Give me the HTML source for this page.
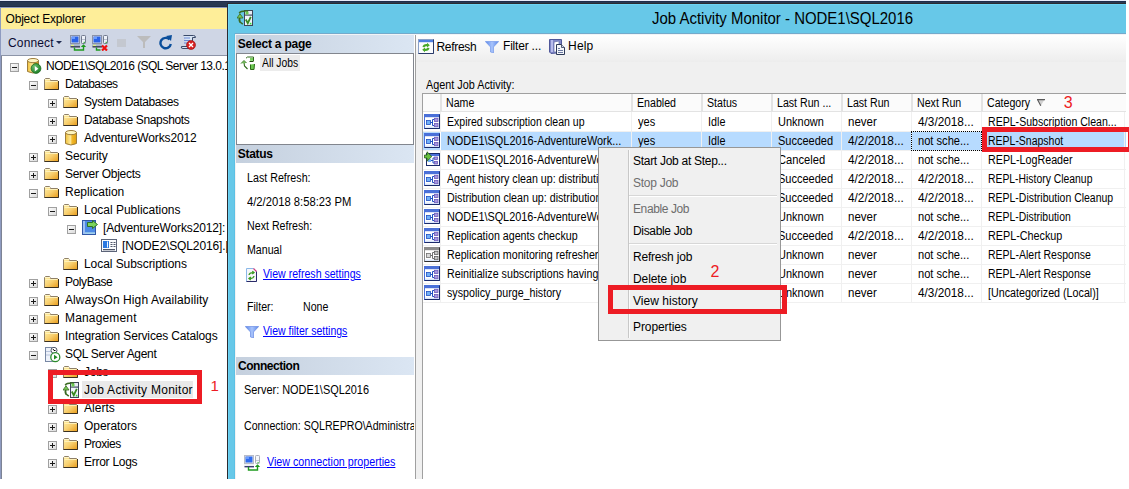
<!DOCTYPE html><html><head><meta charset="utf-8"><style>
html,body{margin:0;padding:0;} body{width:1129px;height:489px;position:relative;overflow:hidden;background:#fff;font-family:"Liberation Sans", sans-serif;} div{box-sizing:border-box;}
a{color:#0000ff}
</style></head><body>
<svg width="0" height="0" style="position:absolute"><defs><linearGradient id="gexp" x1="0" y1="0" x2="1" y2="1"><stop offset="0" stop-color="#fff"/><stop offset="1" stop-color="#d8d8d8"/></linearGradient><linearGradient id="gfold" x1="0" y1="0" x2="1" y2="1"><stop offset="0" stop-color="#fff0a8"/><stop offset="0.5" stop-color="#f8d070"/><stop offset="1" stop-color="#e89a18"/></linearGradient><linearGradient id="gcyl" x1="0" y1="0" x2="1" y2="0"><stop offset="0" stop-color="#f2c23a"/><stop offset="0.45" stop-color="#fbe79a"/><stop offset="0.6" stop-color="#f2b82a"/><stop offset="1" stop-color="#e0a010"/></linearGradient><radialGradient id="ggreen" cx="0.35" cy="0.3" r="0.8"><stop offset="0" stop-color="#6cc070"/><stop offset="1" stop-color="#167a20"/></radialGradient><linearGradient id="gdoc" x1="0" y1="0" x2="1" y2="0"><stop offset="0" stop-color="#f4f6fa"/><stop offset="1" stop-color="#b8c0d0"/></linearGradient></defs></svg>
<div style="position:absolute;left:0px;top:0px;width:1126px;height:1px;background:#e6eaf8"></div>
<div style="position:absolute;left:0px;top:1px;width:1126px;height:1px;background:#1e2c4a"></div>
<div style="position:absolute;left:0px;top:2px;width:1126px;height:4px;background:#283852"></div>
<div style="position:absolute;left:0px;top:6px;width:227px;height:1px;background:#1e2c4a"></div>
<div style="position:absolute;left:0px;top:7px;width:227px;height:472px;background:#fff"></div>
<div style="position:absolute;left:0px;top:7px;width:227px;height:1px;background:#8e9bc0"></div>
<div style="position:absolute;left:0px;top:8px;width:227px;height:21px;background:#feee99"></div>
<div style="position:absolute;left:0px;top:29px;width:227px;height:26px;background:#cfd6e5"></div>
<div style="position:absolute;left:0px;top:55px;width:227px;height:1px;background:#8d95a8"></div>
<div style="position:absolute;left:0px;top:7px;width:1px;height:472px;background:#8e9bc0"></div>
<div style="position:absolute;left:1px;top:56px;width:1px;height:423px;background:#7d8394"></div>
<div style="position:absolute;left:5.50px;top:9.63px;height:18px;line-height:18px;font-size:12px;color:#000;font-weight:400;white-space:pre;letter-spacing:-0.185px;">Object Explorer</div>
<div style="position:absolute;left:8.00px;top:33.93px;height:18px;line-height:18px;font-size:12px;color:#0a0a30;font-weight:400;white-space:pre;letter-spacing:0.152px;">Connect</div>
<svg style="position:absolute;left:56px;top:41px" width="6" height="3" viewBox="0 0 6 3"><path d="M0,0 L6,0 L3,3 Z" fill="#1e2a50"/></svg>
<svg style="position:absolute;left:70px;top:35px" width="17" height="16" viewBox="0 0 17 16"><rect x="0.5" y="0.5" width="9" height="8" fill="#d8dce8" stroke="#8a92a8"/><rect x="1.5" y="1.5" width="7" height="6" fill="#2a62e8"/><rect x="2" y="2" width="3" height="2" fill="#6a9cff"/><rect x="0" y="9" width="10" height="3" rx="1" fill="#a8b4cc"/><rect x="1" y="9.8" width="3" height="1.2" fill="#e0f080"/><rect x="0.5" y="11.2" width="9.5" height="1.3" fill="#30344a"/><rect x="11.5" y="0.5" width="4" height="8" rx="0.8" fill="#eef2fa" stroke="#70788c"/><rect x="12" y="4" width="3" height="1" fill="#b8c0d0"/><rect x="13.6" y="6.8" width="1.3" height="1.3" fill="#30b030"/><path d="M4.5,12.5 L4.5,15 L13.5,15 L13.5,10.5" fill="none" stroke="#1e9a1e" stroke-width="1.4"/><path d="M10.8,12 L13.5,9.2 L16.2,12 Z" fill="#1e9a1e"/></svg>
<svg style="position:absolute;left:92px;top:35px" width="17" height="16" viewBox="0 0 17 16"><rect x="0.5" y="0.5" width="9" height="8" fill="#d8dce8" stroke="#8a92a8"/><rect x="1.5" y="1.5" width="7" height="6" fill="#2a62e8"/><rect x="2" y="2" width="3" height="2" fill="#6a9cff"/><rect x="0" y="9" width="10" height="3" rx="1" fill="#a8b4cc"/><rect x="1" y="9.8" width="3" height="1.2" fill="#e0f080"/><rect x="0.5" y="11.2" width="9.5" height="1.3" fill="#30344a"/><rect x="11.5" y="0.5" width="4" height="8" rx="0.8" fill="#eef2fa" stroke="#70788c"/><rect x="12" y="4" width="3" height="1" fill="#b8c0d0"/><rect x="13.6" y="6.8" width="1.3" height="1.3" fill="#30b030"/><path d="M4.5,12.5 L4.5,15 L8.5,15" fill="none" stroke="#1e9a1e" stroke-width="1.4"/><path d="M10,10.5 L15,15.5 M15,10.5 L10,15.5" stroke="#f01010" stroke-width="2.2"/></svg>
<div style="position:absolute;left:117px;top:39px;width:9px;height:8px;background:#c4c8d0"></div>
<svg style="position:absolute;left:137px;top:36px" width="14" height="12" viewBox="0 0 14 12"><path d="M0,0 L14,0 L8,6 L8,12 L6,12 L6,6 Z" fill="#bcbcbc"/></svg>
<svg style="position:absolute;left:159px;top:35px" width="14" height="15" viewBox="0 0 14 15"><path d="M10.5,4.5 A5.2,5.2 0 1 0 11.8,9" fill="none" stroke="#0b4f9c" stroke-width="2.4"/><path d="M7,1 L13,0 L12,6 Z" fill="#0b4f9c"/></svg>
<svg style="position:absolute;left:180px;top:34px" width="16" height="16" viewBox="0 0 16 16"><path d="M3.5,1.5 L13.5,1.5 Q15.5,1.5 15.5,3.5 L12.5,3.5 L12.5,12.5 L1.5,12.5 Q0.5,14.5 3,14.5 L10,14.5" fill="#d8e4f4" stroke="#3a4a6a"/><path d="M4,4 L10,4 M4,6.5 L10,6.5 M4,9 L9,9" stroke="#6a8ad8"/><circle cx="11" cy="11" r="4.5" fill="#d82020" stroke="#901010" stroke-width="0.6"/><path d="M9,9 L13,13 M13,9 L9,13" stroke="#fff" stroke-width="1.4"/></svg>
<svg style="position:absolute;left:10px;top:63px" width="9" height="9" viewBox="0 0 9 9"><rect x="0.5" y="0.5" width="8" height="8" fill="url(#gexp)" stroke="#a0a0a0"/><rect x="2" y="4" width="5" height="1" fill="#1a1a1a"/></svg>
<svg style="position:absolute;left:27px;top:58px" width="15" height="16" viewBox="0 0 15 16"><path d="M0.5,2.5 L0.5,13.5 Q6,16.5 11.5,13.5 L11.5,2.5 Z" fill="url(#gcyl)" stroke="#9d7d3d"/><ellipse cx="6" cy="2.6" rx="5.5" ry="2.1" fill="#fff6c0" stroke="#9d7d3d"/><circle cx="9" cy="10.5" r="4.9" fill="url(#ggreen)" stroke="#1d6a1d" stroke-width="0.8"/><path d="M7.8,8 L11.4,10.7 L7.8,13.4 Z" fill="#fff"/></svg>
<div style="position:absolute;left:46.00px;top:56.73px;height:18px;line-height:18px;font-size:12px;color:#000;font-weight:400;white-space:pre;letter-spacing:-0.541px;width:180.50px;overflow:hidden;">NODE1\SQL2016 (SQL Server 13.0.1601.5 - SQLREPRO\Administrator)</div>
<svg style="position:absolute;left:29px;top:81px" width="9" height="9" viewBox="0 0 9 9"><rect x="0.5" y="0.5" width="8" height="8" fill="url(#gexp)" stroke="#a0a0a0"/><rect x="2" y="4" width="5" height="1" fill="#1a1a1a"/></svg>
<svg style="position:absolute;left:44px;top:78px" width="15" height="12" viewBox="0 0 15 12"><path d="M0.5,11.5 L0.5,1.5 L1.5,0.5 L5.5,0.5 L6.5,2.5 L13.5,2.5 L14.5,3.5 L14.5,11.5 Z" fill="url(#gfold)" stroke="#8f8068"/><path d="M1,1.5 L6,1.5" stroke="#fff6c8"/><path d="M1.5,3.5 L13.5,3.5" stroke="#fff1b8"/><path d="M0.5,11.5 L14.5,11.5 L14.5,3" fill="none" stroke="#3a3020"/></svg>
<div style="position:absolute;left:65.00px;top:74.73px;height:18px;line-height:18px;font-size:12px;color:#000;font-weight:400;white-space:pre;letter-spacing:-0.532px;width:161.50px;overflow:hidden;">Databases</div>
<svg style="position:absolute;left:48px;top:99px" width="9" height="9" viewBox="0 0 9 9"><rect x="0.5" y="0.5" width="8" height="8" fill="url(#gexp)" stroke="#a0a0a0"/><rect x="2" y="4" width="5" height="1" fill="#1a1a1a"/><rect x="4" y="2" width="1" height="5" fill="#1a1a1a"/></svg>
<svg style="position:absolute;left:63px;top:96px" width="15" height="12" viewBox="0 0 15 12"><path d="M0.5,11.5 L0.5,1.5 L1.5,0.5 L5.5,0.5 L6.5,2.5 L13.5,2.5 L14.5,3.5 L14.5,11.5 Z" fill="url(#gfold)" stroke="#8f8068"/><path d="M1,1.5 L6,1.5" stroke="#fff6c8"/><path d="M1.5,3.5 L13.5,3.5" stroke="#fff1b8"/><path d="M0.5,11.5 L14.5,11.5 L14.5,3" fill="none" stroke="#3a3020"/></svg>
<div style="position:absolute;left:84.00px;top:92.73px;height:18px;line-height:18px;font-size:12px;color:#000;font-weight:400;white-space:pre;letter-spacing:-0.386px;width:142.50px;overflow:hidden;">System Databases</div>
<svg style="position:absolute;left:48px;top:117px" width="9" height="9" viewBox="0 0 9 9"><rect x="0.5" y="0.5" width="8" height="8" fill="url(#gexp)" stroke="#a0a0a0"/><rect x="2" y="4" width="5" height="1" fill="#1a1a1a"/><rect x="4" y="2" width="1" height="5" fill="#1a1a1a"/></svg>
<svg style="position:absolute;left:63px;top:114px" width="15" height="12" viewBox="0 0 15 12"><path d="M0.5,11.5 L0.5,1.5 L1.5,0.5 L5.5,0.5 L6.5,2.5 L13.5,2.5 L14.5,3.5 L14.5,11.5 Z" fill="url(#gfold)" stroke="#8f8068"/><path d="M1,1.5 L6,1.5" stroke="#fff6c8"/><path d="M1.5,3.5 L13.5,3.5" stroke="#fff1b8"/><path d="M0.5,11.5 L14.5,11.5 L14.5,3" fill="none" stroke="#3a3020"/></svg>
<div style="position:absolute;left:84.00px;top:110.73px;height:18px;line-height:18px;font-size:12px;color:#000;font-weight:400;white-space:pre;letter-spacing:-0.328px;width:142.50px;overflow:hidden;">Database Snapshots</div>
<svg style="position:absolute;left:48px;top:135px" width="9" height="9" viewBox="0 0 9 9"><rect x="0.5" y="0.5" width="8" height="8" fill="url(#gexp)" stroke="#a0a0a0"/><rect x="2" y="4" width="5" height="1" fill="#1a1a1a"/><rect x="4" y="2" width="1" height="5" fill="#1a1a1a"/></svg>
<svg style="position:absolute;left:65px;top:130px" width="12" height="16" viewBox="0 0 12 16"><path d="M0.5,2.5 L0.5,13.5 Q6,16.5 11.5,13.5 L11.5,2.5 Z" fill="url(#gcyl)" stroke="#9d7d3d"/><ellipse cx="6" cy="2.6" rx="5.5" ry="2.1" fill="#fff6c0" stroke="#9d7d3d"/></svg>
<div style="position:absolute;left:84.00px;top:128.73px;height:18px;line-height:18px;font-size:12px;color:#000;font-weight:400;white-space:pre;letter-spacing:-0.150px;width:142.50px;overflow:hidden;">AdventureWorks2012</div>
<svg style="position:absolute;left:29px;top:153px" width="9" height="9" viewBox="0 0 9 9"><rect x="0.5" y="0.5" width="8" height="8" fill="url(#gexp)" stroke="#a0a0a0"/><rect x="2" y="4" width="5" height="1" fill="#1a1a1a"/><rect x="4" y="2" width="1" height="5" fill="#1a1a1a"/></svg>
<svg style="position:absolute;left:44px;top:150px" width="15" height="12" viewBox="0 0 15 12"><path d="M0.5,11.5 L0.5,1.5 L1.5,0.5 L5.5,0.5 L6.5,2.5 L13.5,2.5 L14.5,3.5 L14.5,11.5 Z" fill="url(#gfold)" stroke="#8f8068"/><path d="M1,1.5 L6,1.5" stroke="#fff6c8"/><path d="M1.5,3.5 L13.5,3.5" stroke="#fff1b8"/><path d="M0.5,11.5 L14.5,11.5 L14.5,3" fill="none" stroke="#3a3020"/></svg>
<div style="position:absolute;left:65.00px;top:146.73px;height:18px;line-height:18px;font-size:12px;color:#000;font-weight:400;white-space:pre;letter-spacing:-0.078px;width:161.50px;overflow:hidden;">Security</div>
<svg style="position:absolute;left:29px;top:171px" width="9" height="9" viewBox="0 0 9 9"><rect x="0.5" y="0.5" width="8" height="8" fill="url(#gexp)" stroke="#a0a0a0"/><rect x="2" y="4" width="5" height="1" fill="#1a1a1a"/><rect x="4" y="2" width="1" height="5" fill="#1a1a1a"/></svg>
<svg style="position:absolute;left:44px;top:168px" width="15" height="12" viewBox="0 0 15 12"><path d="M0.5,11.5 L0.5,1.5 L1.5,0.5 L5.5,0.5 L6.5,2.5 L13.5,2.5 L14.5,3.5 L14.5,11.5 Z" fill="url(#gfold)" stroke="#8f8068"/><path d="M1,1.5 L6,1.5" stroke="#fff6c8"/><path d="M1.5,3.5 L13.5,3.5" stroke="#fff1b8"/><path d="M0.5,11.5 L14.5,11.5 L14.5,3" fill="none" stroke="#3a3020"/></svg>
<div style="position:absolute;left:65.00px;top:164.73px;height:18px;line-height:18px;font-size:12px;color:#000;font-weight:400;white-space:pre;letter-spacing:-0.280px;width:161.50px;overflow:hidden;">Server Objects</div>
<svg style="position:absolute;left:29px;top:189px" width="9" height="9" viewBox="0 0 9 9"><rect x="0.5" y="0.5" width="8" height="8" fill="url(#gexp)" stroke="#a0a0a0"/><rect x="2" y="4" width="5" height="1" fill="#1a1a1a"/></svg>
<svg style="position:absolute;left:44px;top:186px" width="15" height="12" viewBox="0 0 15 12"><path d="M0.5,11.5 L0.5,1.5 L1.5,0.5 L5.5,0.5 L6.5,2.5 L13.5,2.5 L14.5,3.5 L14.5,11.5 Z" fill="url(#gfold)" stroke="#8f8068"/><path d="M1,1.5 L6,1.5" stroke="#fff6c8"/><path d="M1.5,3.5 L13.5,3.5" stroke="#fff1b8"/><path d="M0.5,11.5 L14.5,11.5 L14.5,3" fill="none" stroke="#3a3020"/></svg>
<div style="position:absolute;left:65.00px;top:182.73px;height:18px;line-height:18px;font-size:12px;color:#000;font-weight:400;white-space:pre;letter-spacing:-0.008px;width:161.50px;overflow:hidden;">Replication</div>
<svg style="position:absolute;left:48px;top:207px" width="9" height="9" viewBox="0 0 9 9"><rect x="0.5" y="0.5" width="8" height="8" fill="url(#gexp)" stroke="#a0a0a0"/><rect x="2" y="4" width="5" height="1" fill="#1a1a1a"/></svg>
<svg style="position:absolute;left:63px;top:204px" width="15" height="12" viewBox="0 0 15 12"><path d="M0.5,11.5 L0.5,1.5 L1.5,0.5 L5.5,0.5 L6.5,2.5 L13.5,2.5 L14.5,3.5 L14.5,11.5 Z" fill="url(#gfold)" stroke="#8f8068"/><path d="M1,1.5 L6,1.5" stroke="#fff6c8"/><path d="M1.5,3.5 L13.5,3.5" stroke="#fff1b8"/><path d="M0.5,11.5 L14.5,11.5 L14.5,3" fill="none" stroke="#3a3020"/></svg>
<div style="position:absolute;left:84.00px;top:200.73px;height:18px;line-height:18px;font-size:12px;color:#000;font-weight:400;white-space:pre;letter-spacing:-0.013px;width:142.50px;overflow:hidden;">Local Publications</div>
<svg style="position:absolute;left:67px;top:225px" width="9" height="9" viewBox="0 0 9 9"><rect x="0.5" y="0.5" width="8" height="8" fill="url(#gexp)" stroke="#a0a0a0"/><rect x="2" y="4" width="5" height="1" fill="#1a1a1a"/></svg>
<svg style="position:absolute;left:82px;top:220px" width="16" height="15" viewBox="0 0 16 15"><rect x="0.5" y="0.5" width="13" height="14" fill="#4d8ae6" stroke="#3157a8"/><rect x="1" y="1" width="2" height="13" fill="#9ebff2"/><rect x="3" y="12.5" width="10" height="1.2" fill="#c8f0f0"/><path d="M5.5,2.5 L10.5,2.5 L10.5,0.5 L15.5,4.5 L10.5,8.5 L10.5,6.5 L5.5,6.5 Z" fill="#7cd45c" stroke="#2a6a1a" stroke-width="0.9"/></svg>
<div style="position:absolute;left:103.00px;top:218.73px;height:18px;line-height:18px;font-size:12px;color:#000;font-weight:400;white-space:pre;letter-spacing:-0.142px;width:123.50px;overflow:hidden;">[AdventureWorks2012]:</div>
<svg style="position:absolute;left:101px;top:239px" width="16" height="13" viewBox="0 0 16 13"><rect x="0.5" y="0.5" width="15" height="12" fill="#fbfcfe" stroke="#5c6478"/><rect x="2" y="2" width="6" height="7" fill="#2a78e0"/><rect x="6" y="2.5" width="1" height="6" fill="#e8f4ff"/><path d="M9.5,3.5 L11.5,3.5 M12.5,3.5 L14.5,3.5 M9.5,5.5 L11.5,5.5 M12.5,5.5 L14.5,5.5 M9.5,7.5 L11.5,7.5 M12.5,7.5 L14.5,7.5" stroke="#50586a"/><rect x="2" y="10" width="12" height="1.3" fill="#50586a"/></svg>
<div style="position:absolute;left:122.00px;top:236.73px;height:18px;line-height:18px;font-size:12px;color:#000;font-weight:400;white-space:pre;letter-spacing:-0.120px;width:104.50px;overflow:hidden;">[NODE2\SQL2016].[AdventureWorks2012]</div>
<svg style="position:absolute;left:63px;top:258px" width="15" height="12" viewBox="0 0 15 12"><path d="M0.5,11.5 L0.5,1.5 L1.5,0.5 L5.5,0.5 L6.5,2.5 L13.5,2.5 L14.5,3.5 L14.5,11.5 Z" fill="url(#gfold)" stroke="#8f8068"/><path d="M1,1.5 L6,1.5" stroke="#fff6c8"/><path d="M1.5,3.5 L13.5,3.5" stroke="#fff1b8"/><path d="M0.5,11.5 L14.5,11.5 L14.5,3" fill="none" stroke="#3a3020"/></svg>
<div style="position:absolute;left:84.00px;top:254.73px;height:18px;line-height:18px;font-size:12px;color:#000;font-weight:400;white-space:pre;letter-spacing:-0.064px;width:142.50px;overflow:hidden;">Local Subscriptions</div>
<svg style="position:absolute;left:29px;top:279px" width="9" height="9" viewBox="0 0 9 9"><rect x="0.5" y="0.5" width="8" height="8" fill="url(#gexp)" stroke="#a0a0a0"/><rect x="2" y="4" width="5" height="1" fill="#1a1a1a"/><rect x="4" y="2" width="1" height="5" fill="#1a1a1a"/></svg>
<svg style="position:absolute;left:44px;top:276px" width="15" height="12" viewBox="0 0 15 12"><path d="M0.5,11.5 L0.5,1.5 L1.5,0.5 L5.5,0.5 L6.5,2.5 L13.5,2.5 L14.5,3.5 L14.5,11.5 Z" fill="url(#gfold)" stroke="#8f8068"/><path d="M1,1.5 L6,1.5" stroke="#fff6c8"/><path d="M1.5,3.5 L13.5,3.5" stroke="#fff1b8"/><path d="M0.5,11.5 L14.5,11.5 L14.5,3" fill="none" stroke="#3a3020"/></svg>
<div style="position:absolute;left:65.00px;top:272.73px;height:18px;line-height:18px;font-size:12px;color:#000;font-weight:400;white-space:pre;letter-spacing:-0.427px;width:161.50px;overflow:hidden;">PolyBase</div>
<svg style="position:absolute;left:29px;top:297px" width="9" height="9" viewBox="0 0 9 9"><rect x="0.5" y="0.5" width="8" height="8" fill="url(#gexp)" stroke="#a0a0a0"/><rect x="2" y="4" width="5" height="1" fill="#1a1a1a"/><rect x="4" y="2" width="1" height="5" fill="#1a1a1a"/></svg>
<svg style="position:absolute;left:44px;top:294px" width="15" height="12" viewBox="0 0 15 12"><path d="M0.5,11.5 L0.5,1.5 L1.5,0.5 L5.5,0.5 L6.5,2.5 L13.5,2.5 L14.5,3.5 L14.5,11.5 Z" fill="url(#gfold)" stroke="#8f8068"/><path d="M1,1.5 L6,1.5" stroke="#fff6c8"/><path d="M1.5,3.5 L13.5,3.5" stroke="#fff1b8"/><path d="M0.5,11.5 L14.5,11.5 L14.5,3" fill="none" stroke="#3a3020"/></svg>
<div style="position:absolute;left:65.00px;top:290.73px;height:18px;line-height:18px;font-size:12px;color:#000;font-weight:400;white-space:pre;letter-spacing:0.085px;width:161.50px;overflow:hidden;">AlwaysOn High Availability</div>
<svg style="position:absolute;left:29px;top:315px" width="9" height="9" viewBox="0 0 9 9"><rect x="0.5" y="0.5" width="8" height="8" fill="url(#gexp)" stroke="#a0a0a0"/><rect x="2" y="4" width="5" height="1" fill="#1a1a1a"/><rect x="4" y="2" width="1" height="5" fill="#1a1a1a"/></svg>
<svg style="position:absolute;left:44px;top:312px" width="15" height="12" viewBox="0 0 15 12"><path d="M0.5,11.5 L0.5,1.5 L1.5,0.5 L5.5,0.5 L6.5,2.5 L13.5,2.5 L14.5,3.5 L14.5,11.5 Z" fill="url(#gfold)" stroke="#8f8068"/><path d="M1,1.5 L6,1.5" stroke="#fff6c8"/><path d="M1.5,3.5 L13.5,3.5" stroke="#fff1b8"/><path d="M0.5,11.5 L14.5,11.5 L14.5,3" fill="none" stroke="#3a3020"/></svg>
<div style="position:absolute;left:65.00px;top:308.73px;height:18px;line-height:18px;font-size:12px;color:#000;font-weight:400;white-space:pre;letter-spacing:0.163px;width:161.50px;overflow:hidden;">Management</div>
<svg style="position:absolute;left:29px;top:333px" width="9" height="9" viewBox="0 0 9 9"><rect x="0.5" y="0.5" width="8" height="8" fill="url(#gexp)" stroke="#a0a0a0"/><rect x="2" y="4" width="5" height="1" fill="#1a1a1a"/><rect x="4" y="2" width="1" height="5" fill="#1a1a1a"/></svg>
<svg style="position:absolute;left:44px;top:330px" width="15" height="12" viewBox="0 0 15 12"><path d="M0.5,11.5 L0.5,1.5 L1.5,0.5 L5.5,0.5 L6.5,2.5 L13.5,2.5 L14.5,3.5 L14.5,11.5 Z" fill="url(#gfold)" stroke="#8f8068"/><path d="M1,1.5 L6,1.5" stroke="#fff6c8"/><path d="M1.5,3.5 L13.5,3.5" stroke="#fff1b8"/><path d="M0.5,11.5 L14.5,11.5 L14.5,3" fill="none" stroke="#3a3020"/></svg>
<div style="position:absolute;left:65.00px;top:326.73px;height:18px;line-height:18px;font-size:12px;color:#000;font-weight:400;white-space:pre;letter-spacing:-0.147px;width:161.50px;overflow:hidden;">Integration Services Catalogs</div>
<svg style="position:absolute;left:29px;top:351px" width="9" height="9" viewBox="0 0 9 9"><rect x="0.5" y="0.5" width="8" height="8" fill="url(#gexp)" stroke="#a0a0a0"/><rect x="2" y="4" width="5" height="1" fill="#1a1a1a"/></svg>
<svg style="position:absolute;left:45px;top:347px" width="16" height="16" viewBox="0 0 16 16"><rect x="0.5" y="0.5" width="8" height="14" fill="#eef2fa" stroke="#7888a4"/><rect x="1" y="4" width="7" height="1" fill="#b8c4dc"/><rect x="1" y="7.5" width="7" height="1" fill="#b8c4dc"/><circle cx="9" cy="3.3" r="3" fill="#fff" stroke="#505868"/><path d="M8,2 L9,3.5 L10.5,3.5" stroke="#000" stroke-width="1" fill="none"/><circle cx="10.3" cy="10.2" r="4.5" fill="#fff" stroke="#2a8a2a" stroke-width="1.3"/><path d="M9,7.8 L12.6,10.2 L9,12.6 Z" fill="#1f8a1f"/></svg>
<div style="position:absolute;left:65.00px;top:344.73px;height:18px;line-height:18px;font-size:12px;color:#000;font-weight:400;white-space:pre;letter-spacing:-0.297px;width:161.50px;overflow:hidden;">SQL Server Agent</div>
<svg style="position:absolute;left:48px;top:369px" width="9" height="9" viewBox="0 0 9 9"><rect x="0.5" y="0.5" width="8" height="8" fill="url(#gexp)" stroke="#a0a0a0"/><rect x="2" y="4" width="5" height="1" fill="#1a1a1a"/><rect x="4" y="2" width="1" height="5" fill="#1a1a1a"/></svg>
<svg style="position:absolute;left:63px;top:366px" width="15" height="12" viewBox="0 0 15 12"><path d="M0.5,11.5 L0.5,1.5 L1.5,0.5 L5.5,0.5 L6.5,2.5 L13.5,2.5 L14.5,3.5 L14.5,11.5 Z" fill="url(#gfold)" stroke="#8f8068"/><path d="M1,1.5 L6,1.5" stroke="#fff6c8"/><path d="M1.5,3.5 L13.5,3.5" stroke="#fff1b8"/><path d="M0.5,11.5 L14.5,11.5 L14.5,3" fill="none" stroke="#3a3020"/></svg>
<div style="position:absolute;left:84.00px;top:362.73px;height:18px;line-height:18px;font-size:12px;color:#000;font-weight:400;white-space:pre;letter-spacing:-0.250px;width:142.50px;overflow:hidden;">Jobs</div>
<svg style="position:absolute;left:63px;top:382px" width="16" height="16" viewBox="0 0 16 16"><rect x="7.5" y="0.5" width="8" height="15" fill="url(#gdoc)" stroke="#3e4658"/><rect x="8" y="1" width="7" height="3.5" fill="#e8ecf4"/><rect x="8" y="4.5" width="7" height="1.2" fill="#505a70"/><rect x="8" y="6" width="7" height="8.5" fill="#f0f4fc"/><path d="M2.2,3.2 Q4,0.6 11,1.2" fill="none" stroke="#3a6a22" stroke-width="1.5"/><rect x="8.5" y="1.5" width="3" height="3" fill="#6ac850"/><path d="M3,12.5 Q1.8,9.5 3,6.5" fill="none" stroke="#3a6a22" stroke-width="1.7"/><path d="M0,8 L3,3.8 L6,8 Z" fill="#78c858" stroke="#3a6a22" stroke-width="0.8"/><path d="M3,12 L5.8,14.2" stroke="#3a6a22" stroke-width="1.5"/><path d="M8.8,9.5 L10.8,13.2 L13.8,6.8" fill="none" stroke="#3a8a22" stroke-width="1.8"/><rect x="12.8" y="12.8" width="1.6" height="1.6" fill="#30e030"/></svg>
<div style="position:absolute;left:82px;top:381px;width:111px;height:17px;background:#e9e9e9"></div>
<div style="position:absolute;left:84.00px;top:380.73px;height:18px;line-height:18px;font-size:12px;color:#000;font-weight:400;white-space:pre;letter-spacing:0.276px;width:142.50px;overflow:hidden;">Job Activity Monitor</div>
<svg style="position:absolute;left:48px;top:405px" width="9" height="9" viewBox="0 0 9 9"><rect x="0.5" y="0.5" width="8" height="8" fill="url(#gexp)" stroke="#a0a0a0"/><rect x="2" y="4" width="5" height="1" fill="#1a1a1a"/><rect x="4" y="2" width="1" height="5" fill="#1a1a1a"/></svg>
<svg style="position:absolute;left:63px;top:402px" width="15" height="12" viewBox="0 0 15 12"><path d="M0.5,11.5 L0.5,1.5 L1.5,0.5 L5.5,0.5 L6.5,2.5 L13.5,2.5 L14.5,3.5 L14.5,11.5 Z" fill="url(#gfold)" stroke="#8f8068"/><path d="M1,1.5 L6,1.5" stroke="#fff6c8"/><path d="M1.5,3.5 L13.5,3.5" stroke="#fff1b8"/><path d="M0.5,11.5 L14.5,11.5 L14.5,3" fill="none" stroke="#3a3020"/></svg>
<div style="position:absolute;left:84.00px;top:398.73px;height:18px;line-height:18px;font-size:12px;color:#000;font-weight:400;white-space:pre;letter-spacing:0.026px;width:142.50px;overflow:hidden;">Alerts</div>
<svg style="position:absolute;left:48px;top:423px" width="9" height="9" viewBox="0 0 9 9"><rect x="0.5" y="0.5" width="8" height="8" fill="url(#gexp)" stroke="#a0a0a0"/><rect x="2" y="4" width="5" height="1" fill="#1a1a1a"/><rect x="4" y="2" width="1" height="5" fill="#1a1a1a"/></svg>
<svg style="position:absolute;left:63px;top:420px" width="15" height="12" viewBox="0 0 15 12"><path d="M0.5,11.5 L0.5,1.5 L1.5,0.5 L5.5,0.5 L6.5,2.5 L13.5,2.5 L14.5,3.5 L14.5,11.5 Z" fill="url(#gfold)" stroke="#8f8068"/><path d="M1,1.5 L6,1.5" stroke="#fff6c8"/><path d="M1.5,3.5 L13.5,3.5" stroke="#fff1b8"/><path d="M0.5,11.5 L14.5,11.5 L14.5,3" fill="none" stroke="#3a3020"/></svg>
<div style="position:absolute;left:84.00px;top:416.73px;height:18px;line-height:18px;font-size:12px;color:#000;font-weight:400;white-space:pre;letter-spacing:-0.055px;width:142.50px;overflow:hidden;">Operators</div>
<svg style="position:absolute;left:48px;top:441px" width="9" height="9" viewBox="0 0 9 9"><rect x="0.5" y="0.5" width="8" height="8" fill="url(#gexp)" stroke="#a0a0a0"/><rect x="2" y="4" width="5" height="1" fill="#1a1a1a"/><rect x="4" y="2" width="1" height="5" fill="#1a1a1a"/></svg>
<svg style="position:absolute;left:63px;top:438px" width="15" height="12" viewBox="0 0 15 12"><path d="M0.5,11.5 L0.5,1.5 L1.5,0.5 L5.5,0.5 L6.5,2.5 L13.5,2.5 L14.5,3.5 L14.5,11.5 Z" fill="url(#gfold)" stroke="#8f8068"/><path d="M1,1.5 L6,1.5" stroke="#fff6c8"/><path d="M1.5,3.5 L13.5,3.5" stroke="#fff1b8"/><path d="M0.5,11.5 L14.5,11.5 L14.5,3" fill="none" stroke="#3a3020"/></svg>
<div style="position:absolute;left:84.00px;top:434.73px;height:18px;line-height:18px;font-size:12px;color:#000;font-weight:400;white-space:pre;letter-spacing:-0.453px;width:142.50px;overflow:hidden;">Proxies</div>
<svg style="position:absolute;left:48px;top:459px" width="9" height="9" viewBox="0 0 9 9"><rect x="0.5" y="0.5" width="8" height="8" fill="url(#gexp)" stroke="#a0a0a0"/><rect x="2" y="4" width="5" height="1" fill="#1a1a1a"/><rect x="4" y="2" width="1" height="5" fill="#1a1a1a"/></svg>
<svg style="position:absolute;left:63px;top:456px" width="15" height="12" viewBox="0 0 15 12"><path d="M0.5,11.5 L0.5,1.5 L1.5,0.5 L5.5,0.5 L6.5,2.5 L13.5,2.5 L14.5,3.5 L14.5,11.5 Z" fill="url(#gfold)" stroke="#8f8068"/><path d="M1,1.5 L6,1.5" stroke="#fff6c8"/><path d="M1.5,3.5 L13.5,3.5" stroke="#fff1b8"/><path d="M0.5,11.5 L14.5,11.5 L14.5,3" fill="none" stroke="#3a3020"/></svg>
<div style="position:absolute;left:84.00px;top:452.73px;height:18px;line-height:18px;font-size:12px;color:#000;font-weight:400;white-space:pre;letter-spacing:-0.268px;width:142.50px;overflow:hidden;">Error Logs</div>
<div style="position:absolute;left:227px;top:3px;width:899px;height:1px;background:#2b2b30"></div>
<div style="position:absolute;left:227px;top:3px;width:1px;height:476px;background:#2b2b30"></div>
<div style="position:absolute;left:228px;top:4px;width:898px;height:30px;background:#67c8e8"></div>
<div style="position:absolute;left:228px;top:4px;width:898px;height:1px;background:#6cd4f6"></div>
<div style="position:absolute;left:228px;top:34px;width:7px;height:445px;background:#67c8e8"></div>
<div style="position:absolute;left:228px;top:4px;width:1px;height:475px;background:#6cd4f6"></div>
<svg style="position:absolute;left:237px;top:10px" width="16" height="16" viewBox="0 0 16 16"><rect x="7.5" y="0.5" width="8" height="15" fill="url(#gdoc)" stroke="#3e4658"/><rect x="8" y="1" width="7" height="3.5" fill="#e8ecf4"/><rect x="8" y="4.5" width="7" height="1.2" fill="#505a70"/><rect x="8" y="6" width="7" height="8.5" fill="#f0f4fc"/><path d="M2.2,3.2 Q4,0.6 11,1.2" fill="none" stroke="#3a6a22" stroke-width="1.5"/><rect x="8.5" y="1.5" width="3" height="3" fill="#6ac850"/><path d="M3,12.5 Q1.8,9.5 3,6.5" fill="none" stroke="#3a6a22" stroke-width="1.7"/><path d="M0,8 L3,3.8 L6,8 Z" fill="#78c858" stroke="#3a6a22" stroke-width="0.8"/><path d="M3,12 L5.8,14.2" stroke="#3a6a22" stroke-width="1.5"/><path d="M8.8,9.5 L10.8,13.2 L13.8,6.8" fill="none" stroke="#3a8a22" stroke-width="1.8"/><rect x="12.8" y="12.8" width="1.6" height="1.6" fill="#30e030"/></svg>
<div style="position:absolute;left:651.50px;top:6.81px;height:24px;line-height:24px;font-size:16px;color:#000;font-weight:400;white-space:pre;transform:scaleX(0.9348);transform-origin:0 0;">Job Activity Monitor - NODE1\SQL2016</div>
<div style="position:absolute;left:235px;top:34px;width:891px;height:445px;background:#fff"></div>
<div style="position:absolute;left:234px;top:33px;width:892px;height:1px;background:#74aacb"></div>
<div style="position:absolute;left:234px;top:33px;width:1px;height:446px;background:#5cc0e4"></div>
<div style="position:absolute;left:235px;top:34px;width:891px;height:1px;background:#f2f4f6"></div>
<div style="position:absolute;left:235px;top:34px;width:1px;height:445px;background:#f2f2f2"></div>
<div style="position:absolute;left:236px;top:35px;width:178px;height:18px;background:linear-gradient(to right,#c5d0de,#dbe6f3)"></div>
<div style="position:absolute;left:237.80px;top:34.73px;height:18px;line-height:18px;font-size:12px;color:#000;font-weight:700;white-space:pre;letter-spacing:-0.231px;">Select a page</div>
<div style="position:absolute;left:236px;top:53px;width:178px;height:92px;background:#fff;border:1px solid #82868e"></div>
<svg style="position:absolute;left:240px;top:55px" width="16" height="16" viewBox="0 0 16 16"><path d="M6,3.2 L7.5,2 L13.5,2 L13.5,6" fill="none" stroke="#2f6a1a" stroke-width="1"/><rect x="10" y="3" width="3" height="2.8" fill="#7ad060"/><path d="M9.5,6.5 L13.5,6.5" stroke="#1f4a10" stroke-width="1"/><path d="M1,8.5 L4,5.5 L6.5,8" fill="#8ad870" stroke="#2f6a1a" stroke-width="0.9"/><path d="M4,7.5 L4.5,11 L7.5,14" fill="none" stroke="#2f6a1a" stroke-width="1.1"/><path d="M10.5,9.5 L10.5,14.5 L14,14.5 L14.5,9" fill="#6ac850" stroke="#2f6a1a" stroke-width="1"/></svg>
<div style="position:absolute;left:260px;top:55px;width:40px;height:16px;background:#ececec"></div>
<div style="position:absolute;left:262.00px;top:53.63px;height:18px;line-height:18px;font-size:12px;color:#000;font-weight:400;white-space:pre;transform:scaleX(0.8596);transform-origin:0 0;">All Jobs</div>
<div style="position:absolute;left:236px;top:145px;width:178px;height:18px;background:linear-gradient(to right,#c5d0de,#dbe6f3)"></div>
<div style="position:absolute;left:237.80px;top:145.43px;height:18px;line-height:18px;font-size:12px;color:#000;font-weight:700;white-space:pre;letter-spacing:-0.334px;">Status</div>
<div style="position:absolute;left:246.80px;top:168.63px;height:18px;line-height:18px;font-size:12px;color:#000;font-weight:400;white-space:pre;transform:scaleX(0.8909);transform-origin:0 0;">Last Refresh:</div>
<div style="position:absolute;left:246.70px;top:192.63px;height:18px;line-height:18px;font-size:12px;color:#000;font-weight:400;white-space:pre;transform:scaleX(0.9359);transform-origin:0 0;">4/2/2018 8:58:23 PM</div>
<div style="position:absolute;left:247.30px;top:216.63px;height:18px;line-height:18px;font-size:12px;color:#000;font-weight:400;white-space:pre;transform:scaleX(0.8883);transform-origin:0 0;">Next Refresh:</div>
<div style="position:absolute;left:246.70px;top:240.63px;height:18px;line-height:18px;font-size:12px;color:#000;font-weight:400;white-space:pre;transform:scaleX(0.8850);transform-origin:0 0;">Manual</div>
<svg style="position:absolute;left:246px;top:268px" width="11" height="14" viewBox="0 0 11 14"><path d="M0.5,13.5 L0.5,0.5 L7.5,0.5 L10.5,3.5 L10.5,13.5 Z" fill="#f6f6fa" stroke="#8ab8e8"/><path d="M10.5,3.5 L10.5,13.5 L0.5,13.5" fill="none" stroke="#2a2a68"/><path d="M7.5,0.5 L10.5,3.5" stroke="#d04080" stroke-width="1.2"/><path d="M3,7 Q3.5,4.3 7.5,4.6 M6.3,3.2 L8,4.6 L6.3,6 M8,8 Q7.5,10.8 3.5,10.5 M4.8,9 L3,10.5 L4.8,12" fill="none" stroke="#3a9a20" stroke-width="1.3"/></svg>
<div style="position:absolute;left:262.50px;top:265.13px;height:18px;line-height:18px;font-size:12px;color:#0000ff;font-weight:400;white-space:pre;transform:scaleX(0.8804);transform-origin:0 0;"><u>View refresh settings</u></div>
<div style="position:absolute;left:246.90px;top:297.93px;height:18px;line-height:18px;font-size:12px;color:#000;font-weight:400;white-space:pre;transform:scaleX(0.8850);transform-origin:0 0;">Filter:</div>
<div style="position:absolute;left:303.00px;top:297.93px;height:18px;line-height:18px;font-size:12px;color:#000;font-weight:400;white-space:pre;transform:scaleX(0.8850);transform-origin:0 0;">None</div>
<svg style="position:absolute;left:245px;top:326px" width="14" height="12" viewBox="0 0 14 12"><path d="M0.3,0.5 L13.7,0.5 L8.5,6 L8.5,12 L5.5,11 L5.5,6 Z" fill="url(#gfun)" stroke="#5a80e0" stroke-width="0.6"/></svg>
<div style="position:absolute;left:262.50px;top:322.43px;height:18px;line-height:18px;font-size:12px;color:#0000ff;font-weight:400;white-space:pre;transform:scaleX(0.8742);transform-origin:0 0;"><u>View filter settings</u></div>
<div style="position:absolute;left:236px;top:357px;width:178px;height:18px;background:linear-gradient(to right,#c5d0de,#dbe6f3)"></div>
<div style="position:absolute;left:238.00px;top:356.93px;height:18px;line-height:18px;font-size:12px;color:#000;font-weight:700;white-space:pre;letter-spacing:-0.465px;">Connection</div>
<div style="position:absolute;left:243.50px;top:381.43px;height:18px;line-height:18px;font-size:12px;color:#000;font-weight:400;white-space:pre;transform:scaleX(0.9099);transform-origin:0 0;">Server: NODE1\SQL2016</div>
<div style="position:absolute;left:243.50px;top:417.23px;height:18px;line-height:18px;font-size:12px;color:#000;font-weight:400;white-space:pre;width:192.09px;overflow:hidden;transform:scaleX(0.8850);transform-origin:0 0;">Connection: SQLREPRO\Administrator</div>
<svg style="position:absolute;left:244px;top:455px" width="17" height="16" viewBox="0 0 17 16"><rect x="0.5" y="0.5" width="9" height="8" fill="#e4e6ee" stroke="#b8bcc8"/><rect x="1.5" y="1.5" width="7" height="6" fill="#2f6cf0"/><rect x="2" y="2" width="3" height="2" fill="#6a9cff"/><rect x="0" y="9" width="10" height="3" fill="#eef0f6"/><rect x="0.5" y="11" width="9.5" height="1.4" fill="#3a3c70"/><rect x="11.5" y="0.5" width="4" height="8" rx="0.8" fill="#f6f8fc" stroke="#a8acb8"/><rect x="12" y="5" width="3" height="1" fill="#c8ccd8"/><rect x="13.5" y="7" width="1.2" height="1.2" fill="#40c040"/><path d="M4.5,12 L4.5,15 L13.5,15 L13.5,10.5" fill="none" stroke="#1e9a1e" stroke-width="1.4"/><path d="M10.8,12 L13.5,9.2 L16.2,12 Z" fill="#1e9a1e"/></svg>
<div style="position:absolute;left:266.70px;top:452.73px;height:18px;line-height:18px;font-size:12px;color:#0000ff;font-weight:400;white-space:pre;transform:scaleX(0.8924);transform-origin:0 0;"><u>View connection properties</u></div>
<div style="position:absolute;left:415px;top:35px;width:1px;height:444px;background:#a0a0a0"></div>
<div style="position:absolute;left:416px;top:35px;width:710px;height:444px;background:#f0f0f0"></div>
<div style="position:absolute;left:416px;top:35px;width:710px;height:27px;background:linear-gradient(to bottom,#ffffff,#ededed)"></div>
<svg style="position:absolute;left:418px;top:39px" width="16" height="15" viewBox="0 0 16 15"><rect x="0.5" y="0.5" width="15" height="14" fill="#fbfcfe" stroke="#8aa0c8"/><path d="M15.5,0.5 L15.5,14.5 L0.5,14.5" fill="none" stroke="#2a3a68"/><rect x="1" y="1" width="14" height="2.2" fill="#4f7fe0"/><path d="M4.5,8 Q5,4.8 9,5 L9,3.8 L11.8,6.2 L9,8.6 L9,7.2 Q6.8,7 6.5,8.2 Z M11.5,9 Q11,12.2 7,12 L7,13.2 L4.2,10.8 L7,8.4 L7,9.8 Q9.2,10 9.5,8.8 Z" fill="#48a828"/></svg>
<div style="position:absolute;left:436.50px;top:37.73px;height:18px;line-height:18px;font-size:12px;color:#000;font-weight:400;white-space:pre;letter-spacing:-0.319px;">Refresh</div>
<svg style="position:absolute;left:485px;top:41px" width="14" height="12" viewBox="0 0 14 12"><defs><linearGradient id="gfun" x1="0" y1="0" x2="1" y2="0"><stop offset="0" stop-color="#5a86e8"/><stop offset="0.5" stop-color="#a8c4fc"/><stop offset="1" stop-color="#5a86e8"/></linearGradient></defs><path d="M0.3,0.5 L13.7,0.5 L8.5,6 L8.5,12 L5.5,11 L5.5,6 Z" fill="url(#gfun)" stroke="#6a90e8" stroke-width="0.6"/></svg>
<div style="position:absolute;left:503.00px;top:37.23px;height:18px;line-height:18px;font-size:12px;color:#000;font-weight:400;white-space:pre;letter-spacing:-0.198px;">Filter ...</div>
<svg style="position:absolute;left:548px;top:38px" width="18" height="17" viewBox="0 0 18 17"><path d="M1.5,1.5 L13.5,1.5 L13.5,14.5 L3,15.5 L1.5,14 Z" fill="#8088c8" stroke="#50589a"/><rect x="3" y="2" width="2" height="12" fill="#b8bcec"/><path d="M6,4 L11,3 L11,14 L6,14 Z" fill="#ffffff" stroke="#7078b0" stroke-width="0.8"/><path d="M8.5,6.5 L13.5,6.5 L16.5,9.5 L16.5,16.5 L8.5,16.5 Z" fill="#f4f6fa" stroke="#2e3a58"/><path d="M13.5,6.5 L13.5,9.5 L16.5,9.5" fill="#d0d8e8" stroke="#2e3a58" stroke-width="0.8"/><path d="M10,10.5 L12,10.5 M10,12.5 L15,12.5 M10,14.5 L15,14.5" stroke="#6a78a0"/></svg>
<div style="position:absolute;left:568.10px;top:37.23px;height:18px;line-height:18px;font-size:12px;color:#000;font-weight:400;white-space:pre;letter-spacing:0.171px;">Help</div>
<div style="position:absolute;left:425.50px;top:75.63px;height:18px;line-height:18px;font-size:12px;color:#000;font-weight:400;white-space:pre;transform:scaleX(0.9026);transform-origin:0 0;">Agent Job Activity:</div>
<div style="position:absolute;left:422px;top:93px;width:704px;height:386px;background:#fff"></div>
<div style="position:absolute;left:422px;top:93px;width:704px;height:1px;background:#a0a0a0"></div>
<div style="position:absolute;left:422px;top:93px;width:1px;height:386px;background:#a0a0a0"></div>
<div style="position:absolute;left:423px;top:94px;width:703px;height:17px;background:#fbfbfb"></div>
<div style="position:absolute;left:423px;top:111px;width:703px;height:1px;background:#e3e3e3"></div>
<div style="position:absolute;left:440px;top:94px;width:2px;height:17px;background:#e3e3e3"></div>
<div style="position:absolute;left:631px;top:94px;width:2px;height:17px;background:#e3e3e3"></div>
<div style="position:absolute;left:701px;top:94px;width:2px;height:17px;background:#e3e3e3"></div>
<div style="position:absolute;left:771px;top:94px;width:2px;height:17px;background:#e3e3e3"></div>
<div style="position:absolute;left:841px;top:94px;width:2px;height:17px;background:#e3e3e3"></div>
<div style="position:absolute;left:911px;top:94px;width:2px;height:17px;background:#e3e3e3"></div>
<div style="position:absolute;left:981px;top:94px;width:2px;height:17px;background:#e3e3e3"></div>
<div style="position:absolute;left:446.00px;top:93.93px;height:18px;line-height:18px;font-size:12px;color:#000;font-weight:400;white-space:pre;transform:scaleX(0.8850);transform-origin:0 0;">Name</div>
<div style="position:absolute;left:637.00px;top:93.93px;height:18px;line-height:18px;font-size:12px;color:#000;font-weight:400;white-space:pre;transform:scaleX(0.8850);transform-origin:0 0;">Enabled</div>
<div style="position:absolute;left:707.00px;top:93.93px;height:18px;line-height:18px;font-size:12px;color:#000;font-weight:400;white-space:pre;transform:scaleX(0.8850);transform-origin:0 0;">Status</div>
<div style="position:absolute;left:777.00px;top:93.93px;height:18px;line-height:18px;font-size:12px;color:#000;font-weight:400;white-space:pre;transform:scaleX(0.8850);transform-origin:0 0;">Last Run ...</div>
<div style="position:absolute;left:847.00px;top:93.93px;height:18px;line-height:18px;font-size:12px;color:#000;font-weight:400;white-space:pre;transform:scaleX(0.8850);transform-origin:0 0;">Last Run</div>
<div style="position:absolute;left:917.00px;top:93.93px;height:18px;line-height:18px;font-size:12px;color:#000;font-weight:400;white-space:pre;transform:scaleX(0.8850);transform-origin:0 0;">Next Run</div>
<div style="position:absolute;left:987.00px;top:93.93px;height:18px;line-height:18px;font-size:12px;color:#000;font-weight:400;white-space:pre;transform:scaleX(0.8850);transform-origin:0 0;">Category</div>
<svg style="position:absolute;left:1037px;top:99px" width="8" height="7" viewBox="0 0 8 7"><path d="M0.5,0.5 L7.5,0.5 L3.8,6.8 Z" fill="#d0d0d0"/><path d="M0,0.6 L8,0.6 M0.6,0.8 L3.8,6.8" stroke="#5a5a5a" stroke-width="1.1"/></svg>
<div style="position:absolute;left:1063.70px;top:90.61px;height:24px;line-height:24px;font-size:16px;color:#ed1c24;font-weight:400;white-space:pre;">3</div>
<div style="position:absolute;left:423px;top:131px;width:703px;height:1px;background:#f0f0f0"></div>
<svg style="position:absolute;left:424px;top:114px" width="16" height="15" viewBox="0 0 16 15"><rect x="0.5" y="0.5" width="15" height="14" fill="#fff" stroke="#4a70d8"/><path d="M15.5,0.5 L15.5,14.5 L0.5,14.5" fill="none" stroke="#1a2a6a"/><rect x="1" y="1" width="14" height="2.2" fill="#4a70d8"/><rect x="1" y="12.5" width="14" height="1.5" fill="#dce8fc"/><rect x="2.5" y="6.5" width="4" height="4" fill="#70b0f8" stroke="#2050c0" stroke-width="0.8"/><path d="M6.5,8.5 L8.5,8.5 M8.5,5.5 L8.5,11.5 M8.5,5.5 L10,5.5 M8.5,11.5 L10,11.5" stroke="#2050c0"/><rect x="10.5" y="4.3" width="3.5" height="3.2" fill="#a898e0" stroke="#6a58b8" stroke-width="0.8"/><rect x="10.5" y="9.5" width="3.5" height="3.2" fill="#a898e0" stroke="#6a58b8" stroke-width="0.8"/></svg>
<div style="position:absolute;left:446.70px;top:112.63px;height:18px;line-height:18px;font-size:12px;color:#000;font-weight:400;white-space:pre;width:215.37px;overflow:hidden;transform:scaleX(0.8775);transform-origin:0 0;">Expired subscription clean up</div>
<div style="position:absolute;left:637.70px;top:112.63px;height:18px;line-height:18px;font-size:12px;color:#000;font-weight:400;white-space:pre;width:73.83px;overflow:hidden;transform:scaleX(0.9210);transform-origin:0 0;">yes</div>
<div style="position:absolute;left:707.70px;top:112.63px;height:18px;line-height:18px;font-size:12px;color:#000;font-weight:400;white-space:pre;width:75.74px;overflow:hidden;transform:scaleX(0.8978);transform-origin:0 0;">Idle</div>
<div style="position:absolute;left:777.70px;top:112.63px;height:18px;line-height:18px;font-size:12px;color:#000;font-weight:400;white-space:pre;width:74.30px;overflow:hidden;transform:scaleX(0.9152);transform-origin:0 0;">Unknown</div>
<div style="position:absolute;left:847.70px;top:112.63px;height:18px;line-height:18px;font-size:12px;color:#000;font-weight:400;white-space:pre;width:71.01px;overflow:hidden;transform:scaleX(0.9577);transform-origin:0 0;">never</div>
<div style="position:absolute;left:917.70px;top:112.63px;height:18px;line-height:18px;font-size:12px;color:#000;font-weight:400;white-space:pre;width:69.21px;overflow:hidden;transform:scaleX(0.9824);transform-origin:0 0;">4/3/2018...</div>
<div style="position:absolute;left:987.70px;top:112.63px;height:18px;line-height:18px;font-size:12px;color:#000;font-weight:400;white-space:pre;width:161.21px;overflow:hidden;transform:scaleX(0.8808);transform-origin:0 0;">REPL-Subscription Clean...</div>
<div style="position:absolute;left:423px;top:132px;width:703px;height:18px;background:#b7dbff"></div>
<div style="position:absolute;left:423px;top:150px;width:703px;height:1px;background:#f0f0f0"></div>
<svg style="position:absolute;left:424px;top:133px" width="16" height="15" viewBox="0 0 16 15"><rect x="0.5" y="0.5" width="15" height="14" fill="#fff" stroke="#4a70d8"/><path d="M15.5,0.5 L15.5,14.5 L0.5,14.5" fill="none" stroke="#1a2a6a"/><rect x="1" y="1" width="14" height="2.2" fill="#4a70d8"/><rect x="1" y="12.5" width="14" height="1.5" fill="#dce8fc"/><rect x="2.5" y="6.5" width="4" height="4" fill="#70b0f8" stroke="#2050c0" stroke-width="0.8"/><path d="M6.5,8.5 L8.5,8.5 M8.5,5.5 L8.5,11.5 M8.5,5.5 L10,5.5 M8.5,11.5 L10,11.5" stroke="#2050c0"/><rect x="10.5" y="4.3" width="3.5" height="3.2" fill="#a898e0" stroke="#6a58b8" stroke-width="0.8"/><rect x="10.5" y="9.5" width="3.5" height="3.2" fill="#a898e0" stroke="#6a58b8" stroke-width="0.8"/></svg>
<div style="position:absolute;left:446.70px;top:131.63px;height:18px;line-height:18px;font-size:12px;color:#000;font-weight:400;white-space:pre;width:208.13px;overflow:hidden;transform:scaleX(0.9081);transform-origin:0 0;">NODE1\SQL2016-AdventureWork...</div>
<div style="position:absolute;left:637.70px;top:131.63px;height:18px;line-height:18px;font-size:12px;color:#000;font-weight:400;white-space:pre;width:73.83px;overflow:hidden;transform:scaleX(0.9210);transform-origin:0 0;">yes</div>
<div style="position:absolute;left:707.70px;top:131.63px;height:18px;line-height:18px;font-size:12px;color:#000;font-weight:400;white-space:pre;width:75.74px;overflow:hidden;transform:scaleX(0.8978);transform-origin:0 0;">Idle</div>
<div style="position:absolute;left:777.70px;top:131.63px;height:18px;line-height:18px;font-size:12px;color:#000;font-weight:400;white-space:pre;width:74.10px;overflow:hidden;transform:scaleX(0.9177);transform-origin:0 0;">Succeeded</div>
<div style="position:absolute;left:847.70px;top:131.63px;height:18px;line-height:18px;font-size:12px;color:#000;font-weight:400;white-space:pre;width:69.21px;overflow:hidden;transform:scaleX(0.9824);transform-origin:0 0;">4/2/2018...</div>
<div style="position:absolute;left:917.70px;top:131.63px;height:18px;line-height:18px;font-size:12px;color:#000;font-weight:400;white-space:pre;width:73.48px;overflow:hidden;transform:scaleX(0.9254);transform-origin:0 0;">not sche...</div>
<div style="position:absolute;left:987.70px;top:131.63px;height:18px;line-height:18px;font-size:12px;color:#000;font-weight:400;white-space:pre;width:162.59px;overflow:hidden;transform:scaleX(0.8733);transform-origin:0 0;">REPL-Snapshot</div>
<div style="position:absolute;left:423px;top:169px;width:703px;height:1px;background:#f0f0f0"></div>
<svg style="position:absolute;left:424px;top:151px" width="16" height="16" viewBox="0 0 16 16"><rect x="2.5" y="2.5" width="13" height="12" fill="#fff" stroke="#1a2a6a"/><rect x="3" y="3" width="12" height="2" fill="#4a70d8"/><rect x="4" y="8" width="3" height="3" fill="#70b0f8"/><path d="M7,9.5 L9,9.5 M9,7 L9,12 M9,7 L10,7 M9,12 L10,12" stroke="#2050c0"/><rect x="10.5" y="6" width="3" height="2.5" fill="#a898e0" stroke="#6a58b8" stroke-width="0.8"/><rect x="10.5" y="10.5" width="3" height="2.5" fill="#a898e0" stroke="#6a58b8" stroke-width="0.8"/><path d="M0.5,4 L3,4 L3,0.8 L7.8,5.5 L3,10.2 L3,7 L0.5,7 Z" fill="#66c040" stroke="#2a5a1a" stroke-width="0.8"/></svg>
<div style="position:absolute;left:446.70px;top:150.63px;height:18px;line-height:18px;font-size:12px;color:#000;font-weight:400;white-space:pre;width:208.84px;overflow:hidden;transform:scaleX(0.9050);transform-origin:0 0;">NODE1\SQL2016-AdventureWorks2012-1</div>
<div style="position:absolute;left:637.70px;top:150.63px;height:18px;line-height:18px;font-size:12px;color:#000;font-weight:400;white-space:pre;width:73.83px;overflow:hidden;transform:scaleX(0.9210);transform-origin:0 0;">yes</div>
<div style="position:absolute;left:707.70px;top:150.63px;height:18px;line-height:18px;font-size:12px;color:#000;font-weight:400;white-space:pre;width:75.74px;overflow:hidden;transform:scaleX(0.8978);transform-origin:0 0;">Idle</div>
<div style="position:absolute;left:777.70px;top:150.63px;height:18px;line-height:18px;font-size:12px;color:#000;font-weight:400;white-space:pre;width:73.03px;overflow:hidden;transform:scaleX(0.9311);transform-origin:0 0;">Canceled</div>
<div style="position:absolute;left:847.70px;top:150.63px;height:18px;line-height:18px;font-size:12px;color:#000;font-weight:400;white-space:pre;width:69.21px;overflow:hidden;transform:scaleX(0.9824);transform-origin:0 0;">4/2/2018...</div>
<div style="position:absolute;left:917.70px;top:150.63px;height:18px;line-height:18px;font-size:12px;color:#000;font-weight:400;white-space:pre;width:73.48px;overflow:hidden;transform:scaleX(0.9254);transform-origin:0 0;">not sche...</div>
<div style="position:absolute;left:987.70px;top:150.63px;height:18px;line-height:18px;font-size:12px;color:#000;font-weight:400;white-space:pre;width:159.06px;overflow:hidden;transform:scaleX(0.8928);transform-origin:0 0;">REPL-LogReader</div>
<div style="position:absolute;left:423px;top:188px;width:703px;height:1px;background:#f0f0f0"></div>
<svg style="position:absolute;left:424px;top:171px" width="16" height="15" viewBox="0 0 16 15"><rect x="0.5" y="0.5" width="15" height="14" fill="#fff" stroke="#4a70d8"/><path d="M15.5,0.5 L15.5,14.5 L0.5,14.5" fill="none" stroke="#1a2a6a"/><rect x="1" y="1" width="14" height="2.2" fill="#4a70d8"/><rect x="1" y="12.5" width="14" height="1.5" fill="#dce8fc"/><rect x="2.5" y="6.5" width="4" height="4" fill="#70b0f8" stroke="#2050c0" stroke-width="0.8"/><path d="M6.5,8.5 L8.5,8.5 M8.5,5.5 L8.5,11.5 M8.5,5.5 L10,5.5 M8.5,11.5 L10,11.5" stroke="#2050c0"/><rect x="10.5" y="4.3" width="3.5" height="3.2" fill="#a898e0" stroke="#6a58b8" stroke-width="0.8"/><rect x="10.5" y="9.5" width="3.5" height="3.2" fill="#a898e0" stroke="#6a58b8" stroke-width="0.8"/></svg>
<div style="position:absolute;left:446.70px;top:169.63px;height:18px;line-height:18px;font-size:12px;color:#000;font-weight:400;white-space:pre;width:212.36px;overflow:hidden;transform:scaleX(0.8900);transform-origin:0 0;">Agent history clean up: distribution</div>
<div style="position:absolute;left:637.70px;top:169.63px;height:18px;line-height:18px;font-size:12px;color:#000;font-weight:400;white-space:pre;width:73.83px;overflow:hidden;transform:scaleX(0.9210);transform-origin:0 0;">yes</div>
<div style="position:absolute;left:707.70px;top:169.63px;height:18px;line-height:18px;font-size:12px;color:#000;font-weight:400;white-space:pre;width:75.74px;overflow:hidden;transform:scaleX(0.8978);transform-origin:0 0;">Idle</div>
<div style="position:absolute;left:777.70px;top:169.63px;height:18px;line-height:18px;font-size:12px;color:#000;font-weight:400;white-space:pre;width:74.10px;overflow:hidden;transform:scaleX(0.9177);transform-origin:0 0;">Succeeded</div>
<div style="position:absolute;left:847.70px;top:169.63px;height:18px;line-height:18px;font-size:12px;color:#000;font-weight:400;white-space:pre;width:69.21px;overflow:hidden;transform:scaleX(0.9824);transform-origin:0 0;">4/2/2018...</div>
<div style="position:absolute;left:917.70px;top:169.63px;height:18px;line-height:18px;font-size:12px;color:#000;font-weight:400;white-space:pre;width:69.21px;overflow:hidden;transform:scaleX(0.9824);transform-origin:0 0;">4/2/2018...</div>
<div style="position:absolute;left:987.70px;top:169.63px;height:18px;line-height:18px;font-size:12px;color:#000;font-weight:400;white-space:pre;width:164.16px;overflow:hidden;transform:scaleX(0.8650);transform-origin:0 0;">REPL-History Cleanup</div>
<div style="position:absolute;left:423px;top:207px;width:703px;height:1px;background:#f0f0f0"></div>
<svg style="position:absolute;left:424px;top:190px" width="16" height="15" viewBox="0 0 16 15"><rect x="0.5" y="0.5" width="15" height="14" fill="#fff" stroke="#4a70d8"/><path d="M15.5,0.5 L15.5,14.5 L0.5,14.5" fill="none" stroke="#1a2a6a"/><rect x="1" y="1" width="14" height="2.2" fill="#4a70d8"/><rect x="1" y="12.5" width="14" height="1.5" fill="#dce8fc"/><rect x="2.5" y="6.5" width="4" height="4" fill="#70b0f8" stroke="#2050c0" stroke-width="0.8"/><path d="M6.5,8.5 L8.5,8.5 M8.5,5.5 L8.5,11.5 M8.5,5.5 L10,5.5 M8.5,11.5 L10,11.5" stroke="#2050c0"/><rect x="10.5" y="4.3" width="3.5" height="3.2" fill="#a898e0" stroke="#6a58b8" stroke-width="0.8"/><rect x="10.5" y="9.5" width="3.5" height="3.2" fill="#a898e0" stroke="#6a58b8" stroke-width="0.8"/></svg>
<div style="position:absolute;left:446.70px;top:188.63px;height:18px;line-height:18px;font-size:12px;color:#000;font-weight:400;white-space:pre;width:212.36px;overflow:hidden;transform:scaleX(0.8900);transform-origin:0 0;">Distribution clean up: distribution</div>
<div style="position:absolute;left:637.70px;top:188.63px;height:18px;line-height:18px;font-size:12px;color:#000;font-weight:400;white-space:pre;width:73.83px;overflow:hidden;transform:scaleX(0.9210);transform-origin:0 0;">yes</div>
<div style="position:absolute;left:707.70px;top:188.63px;height:18px;line-height:18px;font-size:12px;color:#000;font-weight:400;white-space:pre;width:75.74px;overflow:hidden;transform:scaleX(0.8978);transform-origin:0 0;">Idle</div>
<div style="position:absolute;left:777.70px;top:188.63px;height:18px;line-height:18px;font-size:12px;color:#000;font-weight:400;white-space:pre;width:74.10px;overflow:hidden;transform:scaleX(0.9177);transform-origin:0 0;">Succeeded</div>
<div style="position:absolute;left:847.70px;top:188.63px;height:18px;line-height:18px;font-size:12px;color:#000;font-weight:400;white-space:pre;width:69.21px;overflow:hidden;transform:scaleX(0.9824);transform-origin:0 0;">4/2/2018...</div>
<div style="position:absolute;left:917.70px;top:188.63px;height:18px;line-height:18px;font-size:12px;color:#000;font-weight:400;white-space:pre;width:69.21px;overflow:hidden;transform:scaleX(0.9824);transform-origin:0 0;">4/2/2018...</div>
<div style="position:absolute;left:987.70px;top:188.63px;height:18px;line-height:18px;font-size:12px;color:#000;font-weight:400;white-space:pre;width:162.73px;overflow:hidden;transform:scaleX(0.8726);transform-origin:0 0;">REPL-Distribution Cleanup</div>
<div style="position:absolute;left:423px;top:226px;width:703px;height:1px;background:#f0f0f0"></div>
<svg style="position:absolute;left:424px;top:209px" width="16" height="15" viewBox="0 0 16 15"><rect x="0.5" y="0.5" width="15" height="14" fill="#fff" stroke="#4a70d8"/><path d="M15.5,0.5 L15.5,14.5 L0.5,14.5" fill="none" stroke="#1a2a6a"/><rect x="1" y="1" width="14" height="2.2" fill="#4a70d8"/><rect x="1" y="12.5" width="14" height="1.5" fill="#dce8fc"/><rect x="2.5" y="6.5" width="4" height="4" fill="#70b0f8" stroke="#2050c0" stroke-width="0.8"/><path d="M6.5,8.5 L8.5,8.5 M8.5,5.5 L8.5,11.5 M8.5,5.5 L10,5.5 M8.5,11.5 L10,11.5" stroke="#2050c0"/><rect x="10.5" y="4.3" width="3.5" height="3.2" fill="#a898e0" stroke="#6a58b8" stroke-width="0.8"/><rect x="10.5" y="9.5" width="3.5" height="3.2" fill="#a898e0" stroke="#6a58b8" stroke-width="0.8"/></svg>
<div style="position:absolute;left:446.70px;top:207.63px;height:18px;line-height:18px;font-size:12px;color:#000;font-weight:400;white-space:pre;width:208.84px;overflow:hidden;transform:scaleX(0.9050);transform-origin:0 0;">NODE1\SQL2016-AdventureWorks2012-2</div>
<div style="position:absolute;left:637.70px;top:207.63px;height:18px;line-height:18px;font-size:12px;color:#000;font-weight:400;white-space:pre;width:73.83px;overflow:hidden;transform:scaleX(0.9210);transform-origin:0 0;">yes</div>
<div style="position:absolute;left:707.70px;top:207.63px;height:18px;line-height:18px;font-size:12px;color:#000;font-weight:400;white-space:pre;width:75.74px;overflow:hidden;transform:scaleX(0.8978);transform-origin:0 0;">Idle</div>
<div style="position:absolute;left:777.70px;top:207.63px;height:18px;line-height:18px;font-size:12px;color:#000;font-weight:400;white-space:pre;width:74.30px;overflow:hidden;transform:scaleX(0.9152);transform-origin:0 0;">Unknown</div>
<div style="position:absolute;left:847.70px;top:207.63px;height:18px;line-height:18px;font-size:12px;color:#000;font-weight:400;white-space:pre;width:71.01px;overflow:hidden;transform:scaleX(0.9577);transform-origin:0 0;">never</div>
<div style="position:absolute;left:917.70px;top:207.63px;height:18px;line-height:18px;font-size:12px;color:#000;font-weight:400;white-space:pre;width:73.48px;overflow:hidden;transform:scaleX(0.9254);transform-origin:0 0;">not sche...</div>
<div style="position:absolute;left:987.70px;top:207.63px;height:18px;line-height:18px;font-size:12px;color:#000;font-weight:400;white-space:pre;width:163.71px;overflow:hidden;transform:scaleX(0.8674);transform-origin:0 0;">REPL-Distribution</div>
<div style="position:absolute;left:423px;top:245px;width:703px;height:1px;background:#f0f0f0"></div>
<svg style="position:absolute;left:424px;top:228px" width="16" height="15" viewBox="0 0 16 15"><rect x="0.5" y="0.5" width="15" height="14" fill="#fff" stroke="#4a70d8"/><path d="M15.5,0.5 L15.5,14.5 L0.5,14.5" fill="none" stroke="#1a2a6a"/><rect x="1" y="1" width="14" height="2.2" fill="#4a70d8"/><rect x="1" y="12.5" width="14" height="1.5" fill="#dce8fc"/><rect x="2.5" y="6.5" width="4" height="4" fill="#70b0f8" stroke="#2050c0" stroke-width="0.8"/><path d="M6.5,8.5 L8.5,8.5 M8.5,5.5 L8.5,11.5 M8.5,5.5 L10,5.5 M8.5,11.5 L10,11.5" stroke="#2050c0"/><rect x="10.5" y="4.3" width="3.5" height="3.2" fill="#a898e0" stroke="#6a58b8" stroke-width="0.8"/><rect x="10.5" y="9.5" width="3.5" height="3.2" fill="#a898e0" stroke="#6a58b8" stroke-width="0.8"/></svg>
<div style="position:absolute;left:446.70px;top:226.63px;height:18px;line-height:18px;font-size:12px;color:#000;font-weight:400;white-space:pre;width:212.36px;overflow:hidden;transform:scaleX(0.8900);transform-origin:0 0;">Replication agents checkup</div>
<div style="position:absolute;left:637.70px;top:226.63px;height:18px;line-height:18px;font-size:12px;color:#000;font-weight:400;white-space:pre;width:73.83px;overflow:hidden;transform:scaleX(0.9210);transform-origin:0 0;">yes</div>
<div style="position:absolute;left:707.70px;top:226.63px;height:18px;line-height:18px;font-size:12px;color:#000;font-weight:400;white-space:pre;width:75.74px;overflow:hidden;transform:scaleX(0.8978);transform-origin:0 0;">Idle</div>
<div style="position:absolute;left:777.70px;top:226.63px;height:18px;line-height:18px;font-size:12px;color:#000;font-weight:400;white-space:pre;width:74.10px;overflow:hidden;transform:scaleX(0.9177);transform-origin:0 0;">Succeeded</div>
<div style="position:absolute;left:847.70px;top:226.63px;height:18px;line-height:18px;font-size:12px;color:#000;font-weight:400;white-space:pre;width:69.21px;overflow:hidden;transform:scaleX(0.9824);transform-origin:0 0;">4/2/2018...</div>
<div style="position:absolute;left:917.70px;top:226.63px;height:18px;line-height:18px;font-size:12px;color:#000;font-weight:400;white-space:pre;width:69.21px;overflow:hidden;transform:scaleX(0.9824);transform-origin:0 0;">4/2/2018...</div>
<div style="position:absolute;left:987.70px;top:226.63px;height:18px;line-height:18px;font-size:12px;color:#000;font-weight:400;white-space:pre;width:157.91px;overflow:hidden;transform:scaleX(0.8992);transform-origin:0 0;">REPL-Checkup</div>
<div style="position:absolute;left:423px;top:264px;width:703px;height:1px;background:#f0f0f0"></div>
<svg style="position:absolute;left:424px;top:247px" width="16" height="15" viewBox="0 0 16 15"><rect x="0.5" y="0.5" width="15" height="14" fill="#fff" stroke="#8a8a8a"/><path d="M15.5,0.5 L15.5,14.5 L0.5,14.5" fill="none" stroke="#303030"/><rect x="1" y="1" width="14" height="2.2" fill="#8a8a8a"/><rect x="1" y="12.5" width="14" height="1.5" fill="#dce8fc"/><rect x="2.5" y="6.5" width="4" height="4" fill="#d8d8d8" stroke="#707070" stroke-width="0.8"/><path d="M6.5,8.5 L8.5,8.5 M8.5,5.5 L8.5,11.5 M8.5,5.5 L10,5.5 M8.5,11.5 L10,11.5" stroke="#707070"/><rect x="10.5" y="4.3" width="3.5" height="3.2" fill="#c8c8c8" stroke="#606060" stroke-width="0.8"/><rect x="10.5" y="9.5" width="3.5" height="3.2" fill="#c8c8c8" stroke="#606060" stroke-width="0.8"/></svg>
<div style="position:absolute;left:446.70px;top:245.63px;height:18px;line-height:18px;font-size:12px;color:#000;font-weight:400;white-space:pre;width:212.36px;overflow:hidden;transform:scaleX(0.8900);transform-origin:0 0;">Replication monitoring refresher for distribution</div>
<div style="position:absolute;left:637.70px;top:245.63px;height:18px;line-height:18px;font-size:12px;color:#000;font-weight:400;white-space:pre;width:76.40px;overflow:hidden;transform:scaleX(0.8900);transform-origin:0 0;">no</div>
<div style="position:absolute;left:707.70px;top:245.63px;height:18px;line-height:18px;font-size:12px;color:#000;font-weight:400;white-space:pre;width:75.74px;overflow:hidden;transform:scaleX(0.8978);transform-origin:0 0;">Idle</div>
<div style="position:absolute;left:777.70px;top:245.63px;height:18px;line-height:18px;font-size:12px;color:#000;font-weight:400;white-space:pre;width:74.30px;overflow:hidden;transform:scaleX(0.9152);transform-origin:0 0;">Unknown</div>
<div style="position:absolute;left:847.70px;top:245.63px;height:18px;line-height:18px;font-size:12px;color:#000;font-weight:400;white-space:pre;width:71.01px;overflow:hidden;transform:scaleX(0.9577);transform-origin:0 0;">never</div>
<div style="position:absolute;left:917.70px;top:245.63px;height:18px;line-height:18px;font-size:12px;color:#000;font-weight:400;white-space:pre;width:73.48px;overflow:hidden;transform:scaleX(0.9254);transform-origin:0 0;">not sche...</div>
<div style="position:absolute;left:987.70px;top:245.63px;height:18px;line-height:18px;font-size:12px;color:#000;font-weight:400;white-space:pre;width:162.07px;overflow:hidden;transform:scaleX(0.8762);transform-origin:0 0;">REPL-Alert Response</div>
<div style="position:absolute;left:423px;top:283px;width:703px;height:1px;background:#f0f0f0"></div>
<svg style="position:absolute;left:424px;top:266px" width="16" height="15" viewBox="0 0 16 15"><rect x="0.5" y="0.5" width="15" height="14" fill="#fff" stroke="#4a70d8"/><path d="M15.5,0.5 L15.5,14.5 L0.5,14.5" fill="none" stroke="#1a2a6a"/><rect x="1" y="1" width="14" height="2.2" fill="#4a70d8"/><rect x="1" y="12.5" width="14" height="1.5" fill="#dce8fc"/><rect x="2.5" y="6.5" width="4" height="4" fill="#70b0f8" stroke="#2050c0" stroke-width="0.8"/><path d="M6.5,8.5 L8.5,8.5 M8.5,5.5 L8.5,11.5 M8.5,5.5 L10,5.5 M8.5,11.5 L10,11.5" stroke="#2050c0"/><rect x="10.5" y="4.3" width="3.5" height="3.2" fill="#a898e0" stroke="#6a58b8" stroke-width="0.8"/><rect x="10.5" y="9.5" width="3.5" height="3.2" fill="#a898e0" stroke="#6a58b8" stroke-width="0.8"/></svg>
<div style="position:absolute;left:446.70px;top:264.63px;height:18px;line-height:18px;font-size:12px;color:#000;font-weight:400;white-space:pre;width:212.36px;overflow:hidden;transform:scaleX(0.8900);transform-origin:0 0;">Reinitialize subscriptions having data validation failures</div>
<div style="position:absolute;left:637.70px;top:264.63px;height:18px;line-height:18px;font-size:12px;color:#000;font-weight:400;white-space:pre;width:73.83px;overflow:hidden;transform:scaleX(0.9210);transform-origin:0 0;">yes</div>
<div style="position:absolute;left:707.70px;top:264.63px;height:18px;line-height:18px;font-size:12px;color:#000;font-weight:400;white-space:pre;width:75.74px;overflow:hidden;transform:scaleX(0.8978);transform-origin:0 0;">Idle</div>
<div style="position:absolute;left:777.70px;top:264.63px;height:18px;line-height:18px;font-size:12px;color:#000;font-weight:400;white-space:pre;width:74.30px;overflow:hidden;transform:scaleX(0.9152);transform-origin:0 0;">Unknown</div>
<div style="position:absolute;left:847.70px;top:264.63px;height:18px;line-height:18px;font-size:12px;color:#000;font-weight:400;white-space:pre;width:71.01px;overflow:hidden;transform:scaleX(0.9577);transform-origin:0 0;">never</div>
<div style="position:absolute;left:917.70px;top:264.63px;height:18px;line-height:18px;font-size:12px;color:#000;font-weight:400;white-space:pre;width:73.48px;overflow:hidden;transform:scaleX(0.9254);transform-origin:0 0;">not sche...</div>
<div style="position:absolute;left:987.70px;top:264.63px;height:18px;line-height:18px;font-size:12px;color:#000;font-weight:400;white-space:pre;width:162.07px;overflow:hidden;transform:scaleX(0.8762);transform-origin:0 0;">REPL-Alert Response</div>
<div style="position:absolute;left:423px;top:302px;width:703px;height:1px;background:#f0f0f0"></div>
<svg style="position:absolute;left:424px;top:285px" width="16" height="15" viewBox="0 0 16 15"><rect x="0.5" y="0.5" width="15" height="14" fill="#fff" stroke="#4a70d8"/><path d="M15.5,0.5 L15.5,14.5 L0.5,14.5" fill="none" stroke="#1a2a6a"/><rect x="1" y="1" width="14" height="2.2" fill="#4a70d8"/><rect x="1" y="12.5" width="14" height="1.5" fill="#dce8fc"/><rect x="2.5" y="6.5" width="4" height="4" fill="#70b0f8" stroke="#2050c0" stroke-width="0.8"/><path d="M6.5,8.5 L8.5,8.5 M8.5,5.5 L8.5,11.5 M8.5,5.5 L10,5.5 M8.5,11.5 L10,11.5" stroke="#2050c0"/><rect x="10.5" y="4.3" width="3.5" height="3.2" fill="#a898e0" stroke="#6a58b8" stroke-width="0.8"/><rect x="10.5" y="9.5" width="3.5" height="3.2" fill="#a898e0" stroke="#6a58b8" stroke-width="0.8"/></svg>
<div style="position:absolute;left:446.70px;top:283.63px;height:18px;line-height:18px;font-size:12px;color:#000;font-weight:400;white-space:pre;width:212.36px;overflow:hidden;transform:scaleX(0.8900);transform-origin:0 0;">syspolicy_purge_history</div>
<div style="position:absolute;left:637.70px;top:283.63px;height:18px;line-height:18px;font-size:12px;color:#000;font-weight:400;white-space:pre;width:73.83px;overflow:hidden;transform:scaleX(0.9210);transform-origin:0 0;">yes</div>
<div style="position:absolute;left:707.70px;top:283.63px;height:18px;line-height:18px;font-size:12px;color:#000;font-weight:400;white-space:pre;width:75.74px;overflow:hidden;transform:scaleX(0.8978);transform-origin:0 0;">Idle</div>
<div style="position:absolute;left:777.70px;top:283.63px;height:18px;line-height:18px;font-size:12px;color:#000;font-weight:400;white-space:pre;width:74.30px;overflow:hidden;transform:scaleX(0.9152);transform-origin:0 0;">Unknown</div>
<div style="position:absolute;left:847.70px;top:283.63px;height:18px;line-height:18px;font-size:12px;color:#000;font-weight:400;white-space:pre;width:71.01px;overflow:hidden;transform:scaleX(0.9577);transform-origin:0 0;">never</div>
<div style="position:absolute;left:917.70px;top:283.63px;height:18px;line-height:18px;font-size:12px;color:#000;font-weight:400;white-space:pre;width:69.21px;overflow:hidden;transform:scaleX(0.9824);transform-origin:0 0;">4/3/2018...</div>
<div style="position:absolute;left:987.70px;top:283.63px;height:18px;line-height:18px;font-size:12px;color:#000;font-weight:400;white-space:pre;width:159.03px;overflow:hidden;transform:scaleX(0.8929);transform-origin:0 0;">[Uncategorized (Local)]</div>
<div style="position:absolute;left:440px;top:112px;width:1px;height:190px;background:#f0f0f0"></div>
<div style="position:absolute;left:631px;top:112px;width:1px;height:190px;background:#f0f0f0"></div>
<div style="position:absolute;left:701px;top:112px;width:1px;height:190px;background:#f0f0f0"></div>
<div style="position:absolute;left:771px;top:112px;width:1px;height:190px;background:#f0f0f0"></div>
<div style="position:absolute;left:841px;top:112px;width:1px;height:190px;background:#f0f0f0"></div>
<div style="position:absolute;left:911px;top:112px;width:1px;height:190px;background:#f0f0f0"></div>
<div style="position:absolute;left:981px;top:112px;width:1px;height:190px;background:#f0f0f0"></div>
<div style="position:absolute;left:1124px;top:112px;width:1px;height:190px;background:#f0f0f0"></div>
<div style="position:absolute;left:440px;top:132px;width:1px;height:18px;background:#fff"></div>
<div style="position:absolute;left:911px;top:131px;width:71px;height:20px;border:1px dotted #000"></div>
<div style="position:absolute;left:598px;top:147px;width:183px;height:194px;background:#f0f0f0;border:1px solid #979797"></div>
<div style="position:absolute;left:628px;top:150px;width:1px;height:188px;background:#c8c8c8"></div>
<div style="position:absolute;left:629px;top:150px;width:1px;height:188px;background:#fafafa"></div>
<div style="position:absolute;left:629px;top:195px;width:148px;height:1px;background:#d7d7d7"></div>
<div style="position:absolute;left:629px;top:196px;width:148px;height:1px;background:#ffffff"></div>
<div style="position:absolute;left:629px;top:243px;width:148px;height:1px;background:#d7d7d7"></div>
<div style="position:absolute;left:629px;top:244px;width:148px;height:1px;background:#ffffff"></div>
<div style="position:absolute;left:629px;top:312px;width:148px;height:1px;background:#d7d7d7"></div>
<div style="position:absolute;left:629px;top:313px;width:148px;height:1px;background:#ffffff"></div>
<div style="position:absolute;left:633.00px;top:151.93px;height:18px;line-height:18px;font-size:12px;color:#000;font-weight:400;white-space:pre;letter-spacing:-0.285px;">Start Job at Step...</div>
<div style="position:absolute;left:633.00px;top:173.93px;height:18px;line-height:18px;font-size:12px;color:#6d6d6d;font-weight:400;white-space:pre;letter-spacing:-0.263px;">Stop Job</div>
<div style="position:absolute;left:633.00px;top:199.93px;height:18px;line-height:18px;font-size:12px;color:#6d6d6d;font-weight:400;white-space:pre;letter-spacing:-0.392px;">Enable Job</div>
<div style="position:absolute;left:633.00px;top:221.93px;height:18px;line-height:18px;font-size:12px;color:#000;font-weight:400;white-space:pre;letter-spacing:-0.340px;">Disable Job</div>
<div style="position:absolute;left:633.00px;top:247.93px;height:18px;line-height:18px;font-size:12px;color:#000;font-weight:400;white-space:pre;letter-spacing:-0.206px;">Refresh job</div>
<div style="position:absolute;left:633.00px;top:269.93px;height:18px;line-height:18px;font-size:12px;color:#000;font-weight:400;white-space:pre;letter-spacing:-0.081px;">Delete job</div>
<div style="position:absolute;left:633.00px;top:291.93px;height:18px;line-height:18px;font-size:12px;color:#000;font-weight:400;white-space:pre;letter-spacing:0.030px;">View history</div>
<div style="position:absolute;left:633.00px;top:317.93px;height:18px;line-height:18px;font-size:12px;color:#000;font-weight:400;white-space:pre;letter-spacing:-0.099px;">Properties</div>
<div style="position:absolute;left:48px;top:370px;width:154px;height:34px;border:5px solid #ed1c24"></div>
<div style="position:absolute;left:210.50px;top:375.04px;height:22px;line-height:22px;font-size:15px;color:#ed1c24;font-weight:400;white-space:pre;">1</div>
<div style="position:absolute;left:608px;top:285px;width:179px;height:29px;border:5px solid #ed1c24"></div>
<div style="position:absolute;left:710.50px;top:259.51px;height:24px;line-height:24px;font-size:16px;color:#ed1c24;font-weight:400;white-space:pre;">2</div>
<div style="position:absolute;left:982px;top:127px;width:151px;height:24.599999999999994px;border:5px solid #ed1c24"></div>
</body></html>
